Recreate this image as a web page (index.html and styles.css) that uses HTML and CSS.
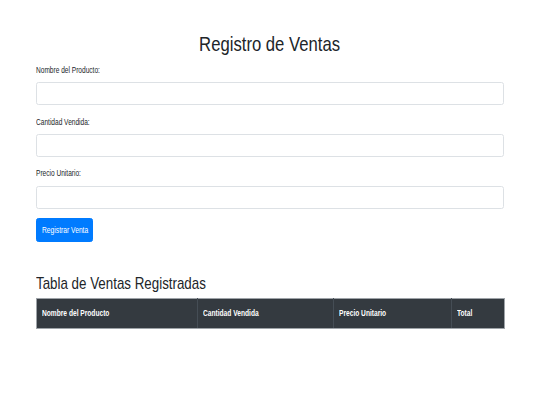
FILE: index.html
```html
<!DOCTYPE html>
<html lang="es">
<head>
<meta charset="utf-8">
<title>Registro de Ventas</title>
<link rel="stylesheet" href="styles.css">
</head>
<body>
<div class="container">
  <h1 class="title"><span class="sq sq-title">Registro de Ventas</span></h1>
  <form class="sale-form">
    <div class="form-group">
      <label class="label" for="nombre"><span class="sq sq-label">Nombre del Producto:</span></label>
      <input class="input" id="nombre" type="text">
    </div>
    <div class="form-group">
      <label class="label" for="cantidad"><span class="sq sq-label">Cantidad Vendida:</span></label>
      <input class="input" id="cantidad" type="number">
    </div>
    <div class="form-group">
      <label class="label" for="precio"><span class="sq sq-label">Precio Unitario:</span></label>
      <input class="input" id="precio" type="number">
    </div>
    <button class="btn" type="button"><span class="sq sq-btn">Registrar Venta</span></button>
  </form>
  <h2 class="subtitle"><span class="sq sq-sub">Tabla de Ventas Registradas</span></h2>
  <table class="sales-table">
    <colgroup>
      <col class="c1"><col class="c2"><col class="c3"><col class="c4">
    </colgroup>
    <thead>
      <tr>
        <th><span class="sq sq-th">Nombre del Producto</span></th>
        <th><span class="sq sq-th">Cantidad Vendida</span></th>
        <th><span class="sq sq-th">Precio Unitario</span></th>
        <th><span class="sq sq-th">Total</span></th>
      </tr>
    </thead>
    <tbody></tbody>
  </table>
</div>
</body>
</html>
```

FILE: styles.css
```css
* { box-sizing: border-box; }
html, body { margin: 0; padding: 0; background: #fff; }
body {
  font-family: "Liberation Sans", Arial, sans-serif;
  color: #212529;
}
.container {
  width: 468px;
  margin: 0 auto;
  padding-top: 34px;
}
.sq {
  display: inline-block;
  white-space: nowrap;
  transform-origin: left center;
}
.sq-title { transform: scaleX(0.843); transform-origin: center center; }
.sq-label { transform: scaleX(0.73); }
.sq-btn { transform: scaleX(0.745); }
.sq-sub { transform: scaleX(0.785); }
.sq-th { transform: scaleX(0.78); }
.title {
  margin: 0 0 8.8px;
  font-size: 19.8px;
  line-height: 20px;
  font-weight: 400;
  text-align: center;
}
.sale-form { margin: 0; }
.form-group { margin-bottom: 9.6px; }
.label {
  display: block;
  font-size: 9px;
  line-height: 14.4px;
  margin-bottom: 4.8px;
}
.input {
  display: block;
  width: 100%;
  height: 23px;
  margin: 0;
  border: 1px solid #dde1e5;
  border-radius: 2.5px;
  background: #fff;
  font: inherit;
}
.btn {
  display: block;
  width: 57.3px;
  height: 23.4px;
  padding: 0 4.7px;
  border: 1px solid #007bff;
  border-radius: 2.5px;
  background: #007bff;
  color: #fff;
  font-family: inherit;
  font-size: 9px;
  line-height: 14.4px;
  text-align: left;
  overflow: visible;
}
.subtitle {
  margin: 31px 0 3.3px;
  font-size: 17px;
  line-height: 22px;
  font-weight: 400;
}
.sales-table {
  width: 468.5px;
  border-collapse: collapse;
  table-layout: fixed;
}
.c1 { width: 160.5px; }
.c2 { width: 136.3px; }
.c3 { width: 118.2px; }
.c4 { width: 53.5px; }
.sales-table th {
  background: #343a40;
  color: #fff;
  font-size: 8.5px;
  font-weight: 700;
  line-height: 14px;
  padding: 7.5px 5px;
  text-align: left;
  white-space: nowrap;
  border: 1px solid #454d55;
  border-top-color: #9ea3a8;
  border-bottom-color: #9ea3a8;
}
.sales-table th:first-child { border-left-color: #9ea3a8; }
.sales-table th:last-child { border-right-color: #9ea3a8; }
```
